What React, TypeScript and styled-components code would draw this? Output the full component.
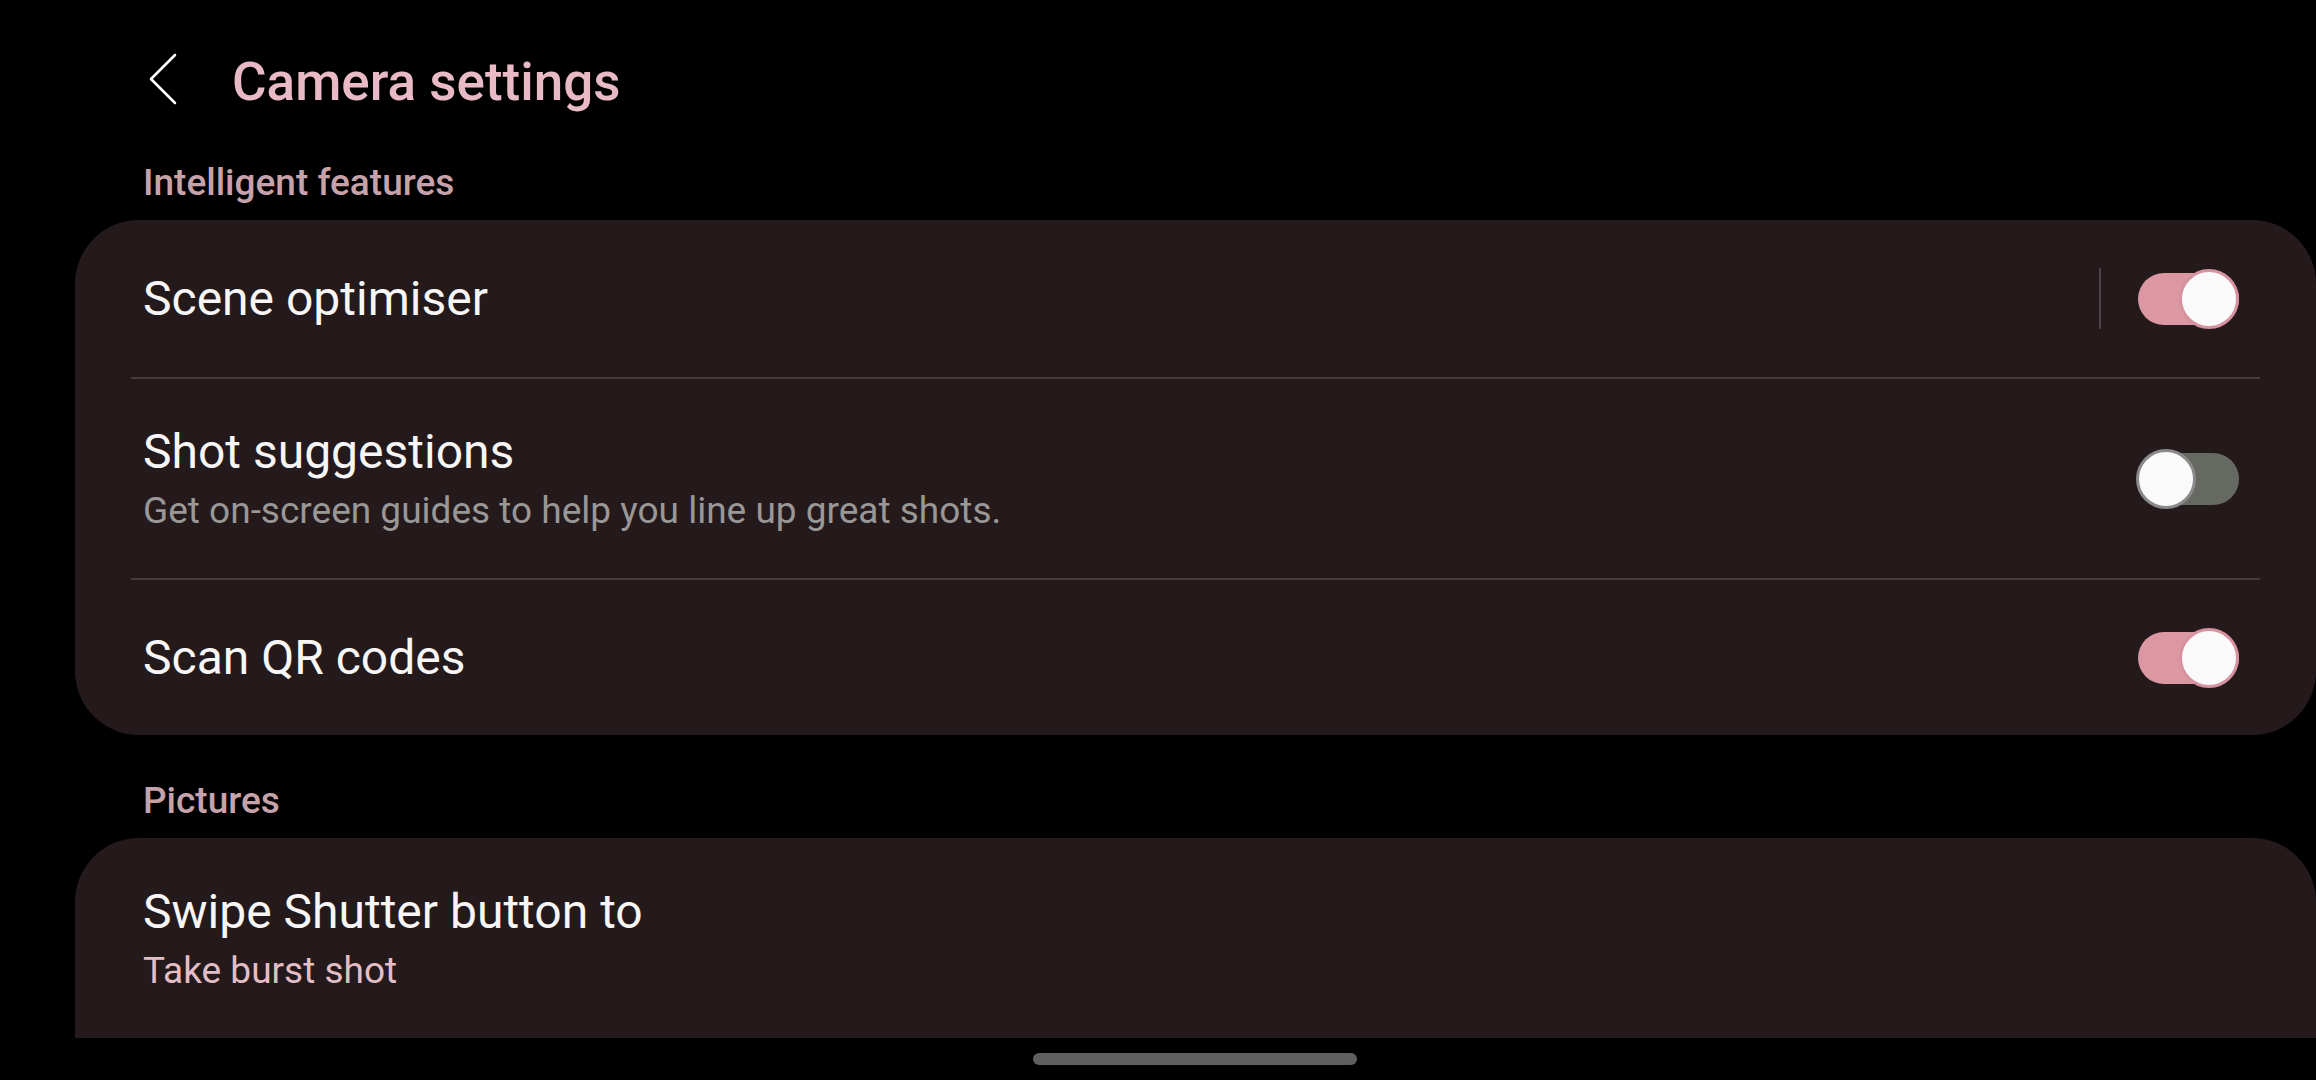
import React from "react";
import styled, { createGlobalStyle } from "styled-components";

const GlobalStyle = createGlobalStyle`
  html, body {
    margin: 0;
    padding: 0;
    background: #000;
  }
  body {
    font-family: Roboto, "Noto Sans", "Liberation Sans", sans-serif;
    -webkit-font-smoothing: antialiased;
  }
  * { box-sizing: border-box; }
`;

const Screen = styled.div`
  width: 2316px;
  height: 1080px;
  background: #000;
  display: flex;
  flex-direction: column;
  overflow: hidden;
`;

const Viewport = styled.main`
  height: 1038px;
  overflow: hidden;
  padding-top: 52px;
  display: flex;
  flex-direction: column;
`;

const Header = styled.header`
  display: flex;
  align-items: center;
  height: 60px;
  padding-left: 148px;
`;

const BackButton = styled.button`
  display: flex;
  align-items: center;
  justify-content: center;
  width: 30px;
  height: 52px;
  margin: -6px 54px 0 0;
  padding: 0;
  border: none;
  background: none;
  cursor: pointer;
`;

const Title = styled.h1`
  margin: 0;
  font-size: 53px;
  line-height: 60px;
  font-weight: 500;
  color: #e8bac5;
`;

const SectionLabel = styled.h2<{ $gap: number }>`
  margin: ${(p) => p.$gap}px 0 15px 0;
  padding-left: 143px;
  font-size: 37px;
  line-height: 44px;
  font-weight: 500;
  color: #c6a3ab;
`;

const Card = styled.section<{ $open?: boolean }>`
  margin-left: 75px;
  width: 2241px;
  flex-shrink: 0;
  background: #241a1c;
  border-radius: ${(p) => (p.$open ? "64px 64px 0 0" : "64px")};
  display: flex;
  flex-direction: column;
`;

const Row = styled.div<{ $minH: number }>`
  display: flex;
  align-items: center;
  min-height: ${(p) => p.$minH}px;
  padding: 0 77px 0 68px;
`;

const RowText = styled.div`
  flex: 1;
  display: flex;
  flex-direction: column;
`;

const RowTitle = styled.div`
  font-size: 48px;
  line-height: 56px;
  color: #f7f5f5;
`;

const RowSub = styled.div<{ $accent?: boolean }>`
  margin-top: 9px;
  font-size: 37px;
  line-height: 44px;
  color: ${(p) => (p.$accent ? "#e3bec7" : "#9a9797")};
`;

const Divider = styled.div`
  height: 2px;
  margin: 0 56px;
  background: #453c3e;
`;

const Trailing = styled.div`
  display: flex;
  align-items: center;
  gap: 35px;
`;

const VSep = styled.div`
  width: 2px;
  height: 61px;
  background: #4a4244;
`;

const ToggleBox = styled.div`
  position: relative;
  width: 103px;
  height: 60px;
  flex-shrink: 0;
`;

const Track = styled.div<{ $on: boolean }>`
  position: absolute;
  left: 2px;
  right: 0;
  top: 4px;
  height: 52px;
  border-radius: 26px;
  background: ${(p) => (p.$on ? "#db97a2" : "#666862")};
`;

const Thumb = styled.div<{ $on: boolean }>`
  position: absolute;
  top: 0;
  ${(p) => (p.$on ? "right: 0;" : "left: 0;")}
  width: 60px;
  height: 60px;
  border-radius: 50%;
  background: #fbfafa;
  border: 3px solid ${(p) => (p.$on ? "#d6929e" : "#8a8a8a")};
`;

const NavBar = styled.div`
  height: 42px;
  display: flex;
  justify-content: flex-start;
  padding: 15px 0 0 1033px;
`;

const HomeIndicator = styled.div`
  width: 324px;
  height: 12px;
  border-radius: 6px;
  background: #5f5f5f;
`;

const Toggle: React.FC<{ on: boolean }> = ({ on }) => (
  <ToggleBox>
    <Track $on={on} />
    <Thumb $on={on} />
  </ToggleBox>
);

export default function App() {
  return (
    <>
      <GlobalStyle />
      <Screen>
        <Viewport>
          <Header>
            <BackButton aria-label="Back">
              <svg width="30" height="52" viewBox="0 0 30 52" fill="none">
                <path
                  d="M27 2 L3 26 L27 50"
                  stroke="#ffffff"
                  strokeWidth="2.6"
                  strokeLinecap="round"
                  strokeLinejoin="round"
                />
              </svg>
            </BackButton>
            <Title>Camera settings</Title>
          </Header>

          <SectionLabel $gap={49}>Intelligent features</SectionLabel>
          <Card>
            <Row $minH={157}>
              <RowText>
                <RowTitle>Scene optimiser</RowTitle>
              </RowText>
              <Trailing>
                <VSep />
                <Toggle on />
              </Trailing>
            </Row>
            <Divider />
            <Row $minH={199}>
              <RowText>
                <RowTitle>Shot suggestions</RowTitle>
                <RowSub>Get on-screen guides to help you line up great shots.</RowSub>
              </RowText>
              <Trailing>
                <Toggle on={false} />
              </Trailing>
            </Row>
            <Divider />
            <Row $minH={155}>
              <RowText>
                <RowTitle>Scan QR codes</RowTitle>
              </RowText>
              <Trailing>
                <Toggle on />
              </Trailing>
            </Row>
          </Card>

          <SectionLabel $gap={44}>Pictures</SectionLabel>
          <Card $open>
            <Row $minH={201}>
              <RowText>
                <RowTitle>Swipe Shutter button to</RowTitle>
                <RowSub $accent>Take burst shot</RowSub>
              </RowText>
            </Row>
          </Card>
        </Viewport>
        <NavBar>
          <HomeIndicator />
        </NavBar>
      </Screen>
    </>
  );
}
